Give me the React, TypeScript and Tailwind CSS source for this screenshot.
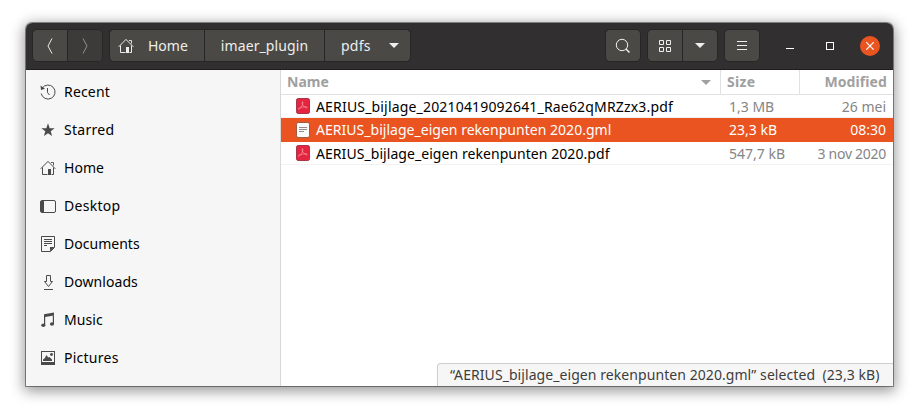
import type { ReactNode } from "react";

const HomeIcon = () => (
  <svg width="16" height="16" viewBox="0 0 16 16" fill="none" stroke="currentColor">
    <path d="M.7 8.8 8 1.4l7.3 7.4" />
    <path d="M2.500 7.500v7h5M13.500 7.500v7h-2" />
    <path d="M8 9h3v6H8z" fill="currentColor" stroke="none" />
    <path d="M11 2.500h2.500v3" strokeWidth=".9" />
  </svg>
);

const RecentIcon = () => (
  <svg width="16" height="16" viewBox="0 0 16 16" fill="none" stroke="currentColor">
    <path d="M2.200 4.200A7 7 0 1 1 1.200 9.500" />
    <path d="M7.500 4v4.500l2 2.500" />
    <path d="M.5 1.500 5 4.800 1 6z" fill="currentColor" stroke="none" />
  </svg>
);

const StarIcon = () => (
  <svg width="16" height="16" viewBox="0 0 16 16" fill="currentColor">
    <path d="m8 1.300 1.700 4.900h4.900l-3.900 3 1.400 4.800L8 11.200 3.900 14l1.400-4.800-3.900-3h4.900z" />
  </svg>
);

const DesktopIcon = () => (
  <svg width="16" height="16" viewBox="0 0 16 16" fill="none" stroke="currentColor">
    <rect x=".5" y="2.500" width="15" height="12" rx="1.500" />
    <path d="M1 3h3v11H1z" fill="currentColor" stroke="none" />
  </svg>
);

const DocumentsIcon = () => (
  <svg width="16" height="16" viewBox="0 0 16 16" fill="none" stroke="currentColor">
    <path d="M1.500.5h13v11l-4 4h-9z" />
    <path d="M4 3.500h8M4 5.500h8M4 7.500h8M4 9.500h3" />
    <path d="M10 11h4.500L10 15.500z" fill="currentColor" stroke="none" />
  </svg>
);

const DownloadsIcon = () => (
  <svg width="16" height="16" viewBox="0 0 16 16" fill="none" stroke="currentColor">
    <path d="M6.500 1.500h4v6h2l-4 5-4-5h2zM4 15.500h9" />
  </svg>
);

const MusicIcon = () => (
  <svg width="16" height="16" viewBox="0 0 16 16" fill="currentColor">
    <path d="M4 2.200 14 .5v3L5.200 5v8H4zM12.800 3H14v9h-1.200z" />
    <ellipse cx="3.300" cy="13.200" rx="2.100" ry="1.800" />
    <ellipse cx="12" cy="12" rx="2.100" ry="1.800" />
  </svg>
);

const PicturesIcon = () => (
  <svg width="16" height="16" viewBox="0 0 16 16" fill="currentColor">
    <path fillRule="evenodd" d="M1 1h14v14H1zM2 2v10h12V2z" />
    <path d="M3 11V9.500l2-1.500 1-2.500h1l1 2L9.500 7l2.500 2.500V11z" />
    <circle cx="11.500" cy="4.500" r="1.400" />
  </svg>
);

const PdfIcon = () => (
  <svg width="16" height="16" viewBox="0 0 16 16" fill="none">
    <rect x="1.500" y=".5" width="13" height="15" rx="1.700" fill="#e52440" stroke="#aa3449" />
    <path
      d="M7.500 3.500c1 1 0 3.500-1.300 5.300C5 10.500 3.500 11.800 3.500 11c0-1 4-2.200 7-2.200 2.500 0 2.200 1.300.8.900-2-.5-4.300-3-4.200-5 0-.7.200-1 .4-1.200z"
      stroke="#f7a9b4"
      strokeWidth=".6"
    />
  </svg>
);

const TextFileIcon = () => (
  <svg width="16" height="16" viewBox="0 0 16 16" fill="none">
    <rect x="1.500" y=".5" width="13" height="15" rx="1.700" fill="#fafafa" stroke="#9d5b42" />
    <path d="M4 5.500h8M4 7.500h8M4 9.500h5" stroke="#8d8d8d" />
  </svg>
);

const Triangle = () => (
  <svg width="10" height="5" viewBox="0 0 10 5" fill="currentColor">
    <path d="M0 0h10L5 5z" />
  </svg>
);

const places: { label: string; icon: ReactNode; tracking: string }[] = [
  { label: "Recent", icon: <RecentIcon />, tracking: "tracking-[0.17px]" },
  { label: "Starred", icon: <StarIcon />, tracking: "tracking-[0.28px]" },
  { label: "Home", icon: <HomeIcon />, tracking: "tracking-[0.05px]" },
  { label: "Desktop", icon: <DesktopIcon />, tracking: "tracking-[0.28px]" },
  { label: "Documents", icon: <DocumentsIcon />, tracking: "tracking-[0.02px]" },
  { label: "Downloads", icon: <DownloadsIcon />, tracking: "tracking-[0.06px]" },
  { label: "Music", icon: <MusicIcon />, tracking: "tracking-[0.1px]" },
  { label: "Pictures", icon: <PicturesIcon />, tracking: "tracking-[0.25px]" },
];

const files = [
  {
    name: "AERIUS_bijlage_20210419092641_Rae62qMRZzx3.pdf",
    size: "1,3 MB",
    date: "26 mei",
    selected: false,
    tracking: "tracking-[0.175px]",
    dateTracking: "",
  },
  {
    name: "AERIUS_bijlage_eigen rekenpunten 2020.gml",
    size: "23,3 kB",
    date: "08:30",
    selected: true,
    tracking: "tracking-[0.025px]",
    dateTracking: "",
  },
  {
    name: "AERIUS_bijlage_eigen rekenpunten 2020.pdf",
    size: "547,7 kB",
    date: "3 nov 2020",
    selected: false,
    tracking: "tracking-[0.06px]",
    dateTracking: "tracking-[-0.28px]",
  },
];

const group = "flex h-[33px] overflow-hidden rounded-[5px] border border-[#272526] bg-[#4a4946]";
const cell = "flex items-center justify-center";

function TitleBar() {
  return (
    <header className="flex h-[47px] items-start rounded-t-[6px] border-b border-[#1f1d1e] bg-[#322f30] pt-[6px] pl-[6px] text-[#eeeeec]">
      <div className={`${group} w-[71px]`}>
        <div className={`${cell} w-[34px]`}>
          <svg width="6" height="16" viewBox="0 0 6 16" fill="none" stroke="currentColor">
            <path d="M5 .5 1 8l4 7.500" />
          </svg>
        </div>
        <div className={`${cell} flex-1 border-l border-[#272526] bg-[#3c3b3a] text-[#91908f]`}>
          <svg width="6" height="16" viewBox="0 0 6 16" fill="none" stroke="currentColor">
            <path d="m1 .5 4 7.500-4 7.500" />
          </svg>
        </div>
      </div>

      <nav className={`${group} ml-[6px] w-[302px]`}>
        <div className="flex w-[94px] items-center gap-[14px] pl-[8px]">
          <HomeIcon />
          <span>Home</span>
        </div>
        <div className={`${cell} w-[120px] border-l border-[#272526] tracking-[0.1px]`}>imaer_plugin</div>
        <div className="flex flex-1 items-center gap-[18px] border-l border-[#272526] pl-[16px]">
          <span className="tracking-[0.25px]">pdfs</span>
          <Triangle />
        </div>
      </nav>

      <div className={`${group} ${cell} ml-auto w-[36px]`}>
        <svg width="16" height="16" viewBox="0 0 16 16" fill="none" stroke="currentColor">
          <circle cx="7" cy="7" r="5.700" />
          <path d="m11 11 3.500 3.500" strokeWidth="1.500" />
        </svg>
      </div>
      <div className={`${group} ml-[6px] w-[71px]`}>
        <div className={`${cell} w-[34px]`}>
          <svg width="12" height="12" viewBox="0 0 12 12" fill="none" stroke="currentColor">
            <path d="M.5.5h4v4h-4zM7.500.5h4v4h-4zM.5 7.500h4v4h-4zM7.500 7.500h4v4h-4z" />
          </svg>
        </div>
        <div className={`${cell} flex-1 border-l border-[#272526]`}>
          <Triangle />
        </div>
      </div>
      <div className={`${group} ${cell} ml-[6px] w-[36px]`}>
        <svg width="10" height="9" viewBox="0 0 10 9" stroke="currentColor">
          <path d="M0 .5h10M0 4.500h10M0 8.500h10" />
        </svg>
      </div>
      <div className="mt-[19px] ml-[26px] h-px w-2 bg-white" />
      <div className="mt-[13px] ml-[32px] size-2 border border-white" />
      <div className={`${cell} mt-[7px] mr-[13px] ml-[26px] size-5 rounded-full bg-[#e95420] text-white`}>
        <svg width="8" height="8" viewBox="0 0 8 8" stroke="currentColor" strokeWidth="1.200">
          <path d="m.3.3 7.400 7.400M7.700.3.3 7.700" />
        </svg>
      </div>
    </header>
  );
}

function Sidebar() {
  return (
    <aside className="w-[255px] border-r border-[#d8d8d8] bg-[#f6f6f6] pt-[3px]">
      {places.map((p) => (
        <div key={p.label} className="flex h-[38px] items-center gap-2 pl-[14px] text-[#4a4a4a]">
          {p.icon}
          <span className={`text-black ${p.tracking}`}>{p.label}</span>
        </div>
      ))}
    </aside>
  );
}

function FileList() {
  return (
    <main className="flex min-w-0 flex-1 flex-col bg-white">
      <div className="flex h-[25px] border-b border-[#e1e1e1] font-bold text-[#a0a0a0]">
        <div className="flex w-[439px] items-center justify-between pr-[9px] pl-[6px]">
          <span>Name</span>
          <Triangle />
        </div>
        <div className="flex w-[79px] items-center border-l border-[#e1e1e1] pl-[6px] tracking-[0.35px]">Size</div>
        <div className="flex flex-1 items-center justify-end border-l border-[#e1e1e1] pr-[6px] tracking-[0.1px]">
          Modified
        </div>
      </div>
      {files.map((f) => (
        <div
          key={f.name}
          className={
            f.selected
              ? "flex h-6 items-center bg-[#e95420] leading-[20px] text-white"
              : "flex h-[23px] items-center border-b border-[#f2f2f2] leading-[22px] text-[#858585]"
          }
        >
          <div className="flex w-[440px] items-center gap-[5px] pl-[14px]">
            {f.selected ? <TextFileIcon /> : <PdfIcon />}
            <span className={`${f.selected ? "text-white" : "pt-px text-black"} ${f.tracking}`}>{f.name}</span>
          </div>
          <div className={f.selected ? "w-[79px] pl-[8px]" : "w-[79px] pt-px pl-[8px]"}>{f.size}</div>
          <div className={`flex-1 pr-[7px] text-right ${f.selected ? "" : "pt-px"} ${f.dateTracking}`}>{f.date}</div>
        </div>
      ))}
      <div className="mt-auto flex h-[23px] w-[456px] items-center self-end rounded-tl-[4px] border-t border-l border-[#cecece] bg-[#f6f6f6] pl-[12px] tracking-[0.07px] whitespace-pre text-[#3d3d3d]">
        “AERIUS_bijlage_eigen rekenpunten 2020.gml” selected  (23,3 kB)
      </div>
    </main>
  );
}

export default function App() {
  return (
    <div className="h-[415px] w-[919px] overflow-hidden bg-white px-[26px] pt-[23px] font-['Noto_Sans',sans-serif] text-[14px] leading-[20px] whitespace-nowrap">
      <div className="flex h-[363px] w-[867px] flex-col rounded-t-[6px] shadow-[0_0_0_1px_rgba(0,0,0,0.4),0_3px_14px_2px_rgba(0,0,0,0.42)]">
        <TitleBar />
        <div className="flex min-h-0 flex-1">
          <Sidebar />
          <FileList />
        </div>
      </div>
    </div>
  );
}
